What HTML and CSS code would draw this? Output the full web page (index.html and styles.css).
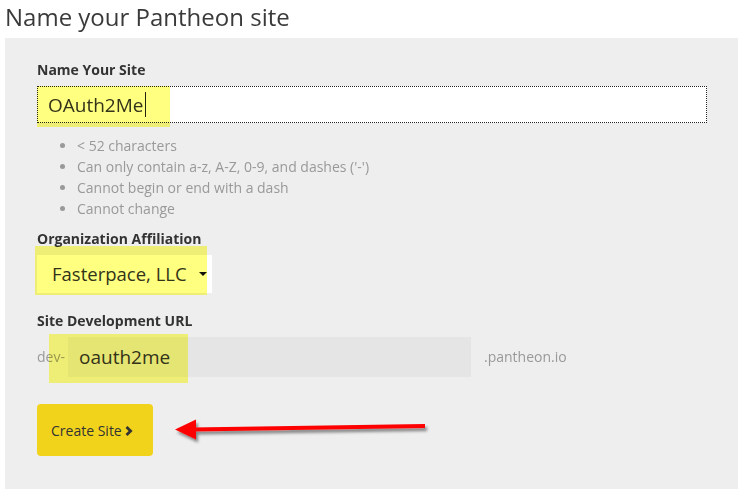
FILE: index.html
```html
<!DOCTYPE html>
<html>
<head>
<meta charset="utf-8">
<link rel="stylesheet" href="styles.css">
</head>
<body>
<h1 class="title">Name your Pantheon site</h1>
<div class="panel">
  <label class="label">Name Your Site</label>
  <div class="name-input">
    <span class="name-text">OAuth2Me</span><span class="caret"></span>
    <span class="hl hl-name"></span>
  </div>
  <ul class="rules">
    <li>&lt; 52 characters</li>
    <li>Can only contain a-z, A-Z, 0-9, and dashes ('-')</li>
    <li>Cannot begin or end with a dash</li>
    <li>Cannot change</li>
  </ul>
  <label class="label label-org">Organization Affiliation</label>
  <div class="select">
    <span class="select-text">Fasterpace, LLC</span>
    <span class="select-arrow"></span>
    <span class="hl hl-org"></span>
  </div>
  <label class="label label-url">Site Development URL</label>
  <div class="url-row">
    <span class="affix">dev-</span>
    <div class="url-box">
      <span class="url-text">oauth2me</span>
      <span class="hl hl-url"></span>
    </div>
    <span class="affix affix-end">.pantheon.io</span>
  </div>
  <div class="actions">
    <button class="btn">Create Site <svg class="chev" width="8" height="10" viewBox="0 0 8 10"><path d="M1.5 1 L5.6 5 L1.5 9" fill="none" stroke="#333" stroke-width="2.8"/></svg></button>
    <svg class="arrow" width="270" height="34" viewBox="0 0 270 34">
      <defs>
        <filter id="sh" x="-10%" y="-50%" width="120%" height="200%">
          <feDropShadow dx="2" dy="3" stdDeviation="1.8" flood-color="#000" flood-opacity="0.45"/>
        </filter>
      </defs>
      <g filter="url(#sh)">
        <path d="M22 15.5 L255 12" stroke="#f00" stroke-width="4" fill="none"/>
        <polygon points="5,15.5 26,5.5 26,25.5" fill="#f00"/>
      </g>
    </svg>
  </div>
</div>
</body>
</html>
```

FILE: styles.css
```css
html, body {
  margin: 0;
  padding: 0;
  overflow: hidden;
  background: #fff;
}
body {
  font-family: "Open Sans", "Noto Sans", sans-serif;
  color: #333;
}
.title {
  margin: 0;
  padding: 0 0 0 5px;
  font-size: 24px;
  font-weight: 400;
  line-height: 33px;
  color: #3a3a3a;
  height: 38px;
}
.panel {
  margin-left: 5px;
  background: #eeeeee;
  padding: 23px 31px 40px 32px;
  display: flex;
  flex-direction: column;
  align-items: flex-start;
}
.label {
  display: block;
  font-size: 14px;
  font-weight: 700;
  line-height: 18px;
  color: #333;
}
.name-input {
  position: relative;
  margin-top: 7px;
  box-sizing: border-box;
  width: 670px;
  height: 37px;
  background: #fff;
  border: 1px dotted #222;
  display: flex;
  align-items: center;
  padding-left: 10px;
}
.name-text {
  font-size: 19px;
  color: #333;
  line-height: 26px;
}
.caret {
  display: inline-block;
  width: 1px;
  height: 25px;
  background: #222;
  margin-left: 1px;
}
.hl {
  position: absolute;
  background: #ffff80;
  mix-blend-mode: multiply;
  pointer-events: none;
}
.hl-name {
  left: -1px;
  top: -1px;
  width: 133px;
  height: 41px;
}
.rules {
  margin: 12px 0 0 0;
  padding-left: 40px;
  font-size: 14px;
  line-height: 21px;
  color: #999;
}
.rules li::marker {
  color: #999;
}
.label-org {
  margin-top: 11px;
}
.select {
  position: relative;
  margin-top: 7px;
  width: 175px;
  height: 38px;
  background: #fff;
  display: flex;
  align-items: center;
  padding-left: 15px;
  box-sizing: border-box;
}
.select-text {
  font-size: 18.5px;
  color: #333;
  line-height: 26px;
}
.select-arrow {
  position: absolute;
  left: 162px;
  top: 17px;
  width: 0;
  height: 0;
  border-left: 4px solid transparent;
  border-right: 4px solid transparent;
  border-top: 4px solid #111;
}
.hl-org {
  left: -2px;
  top: -9px;
  width: 172px;
  height: 49px;
}
.label-url {
  margin-top: 19px;
}
.url-row {
  margin-top: 7px;
  display: flex;
  align-items: center;
}
.affix {
  font-size: 14px;
  color: #999;
  width: 31px;
  line-height: 20px;
}
.affix-end {
  width: auto;
  margin-left: 13px;
}
.url-box {
  position: relative;
  width: 403px;
  height: 40px;
  background: #e5e5e5;
  display: flex;
  align-items: center;
  padding-left: 11px;
  box-sizing: border-box;
}
.url-text {
  font-size: 19px;
  color: #333;
  line-height: 26px;
}
.hl-url {
  left: -19px;
  top: -3px;
  width: 139px;
  height: 49px;
}
.actions {
  position: relative;
  margin-top: 27px;
}
.btn {
  font-family: "Open Sans", "Noto Sans", sans-serif;
  font-size: 14px;
  color: #333;
  background: #f1d31c;
  border: none;
  border-radius: 4px;
  width: 116px;
  height: 52px;
  padding: 0 0 0 14px;
  display: flex;
  align-items: center;
  justify-content: flex-start;
  gap: 3px;
}
.chev {
  display: block;
  margin-top: 1px;
}
.arrow {
  position: absolute;
  left: 133px;
  top: 10px;
}
```
